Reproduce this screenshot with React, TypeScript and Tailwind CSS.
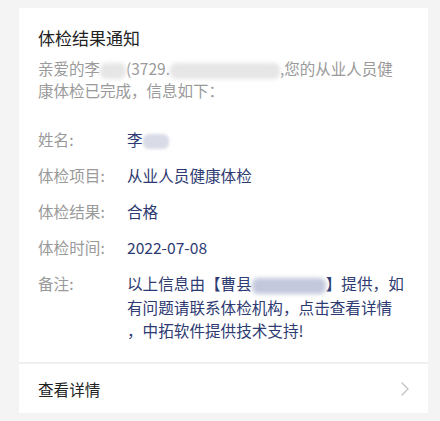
import React from "react";

const Blob = ({ w, dark = false }: { w: number; dark?: boolean }) => (
  <span
    className={`inline-block h-[16px] align-middle rounded-md blur-[2px] ${dark ? "bg-[#c7cbdc]" : "bg-[#e6e6e6]"}`}
    style={{ width: w }}
  />
);

export default function App() {
  const font = { fontFamily: '"Noto Sans CJK SC", "Noto Sans", sans-serif' };
  const rows: { label: string; value: React.ReactNode }[] = [
    {
      label: "姓名:",
      value: (
        <span>
          李<span className="inline-block h-[15px] w-[26px] align-middle rounded-md bg-[#d9dbe6] blur-[1.5px]" />
        </span>
      ),
    },
    { label: "体检项目:", value: "从业人员健康体检" },
    { label: "体检结果:", value: "合格" },
    { label: "体检时间:", value: "2022-07-08" },
    {
      label: "备注:",
      value: (
        <span>
          以上信息由【曹县
          <span className="inline-block h-[16px] w-[74px] align-middle rounded-md bg-[#c3c8dd] blur-[2px]" />
          】提供，如
          <br />
          有问题请联系体检机构，点击查看详情
          <br />，中拓软件提供技术支持!
        </span>
      ),
    },
  ];
  return (
    <div className="min-h-[421px] w-[440px] bg-[#f4f4f4] pt-[8px] pb-[6px] pl-[19px] pr-[12px]" style={font}>
      <div className="bg-white">
        <div className="px-[19px] pt-[18px] pb-[19px]">
          <div className="text-[17px] leading-[24px] text-[#222]">体检结果通知</div>
          <div className="mt-[7px] text-[15.5px] leading-[22px] text-[#9a9a9a] whitespace-nowrap">
            亲爱的李<Blob w={26} />(3729.<Blob w={110} />,您的从业人员健
            <br />
            康体检已完成，信息如下：
          </div>
          <div className="mt-[27px] flex flex-col gap-[12.5px]">
            {rows.map((r) => (
              <div key={r.label} className="flex text-[15.6px] leading-[23.5px]">
                <div className="w-[89px] shrink-0 text-[#9a9a9a]">{r.label}</div>
                <div className="whitespace-nowrap text-[#2e3b72]">{r.value}</div>
              </div>
            ))}
          </div>
        </div>
        <div className="flex h-[51px] items-center justify-between border-t-2 border-[#efefef] pl-[19px] pr-[19px]">
          <span className="text-[15.6px] leading-[22px] text-[#222] pt-[2px]">查看详情</span>
          <svg width="8" height="14" viewBox="0 0 8 14" fill="none" className="mt-[2px]">
            <path d="M1 1l6 6-6 6" stroke="#c4c4c4" strokeWidth="1.4" strokeLinecap="round" strokeLinejoin="round" />
          </svg>
        </div>
      </div>
    </div>
  );
}
